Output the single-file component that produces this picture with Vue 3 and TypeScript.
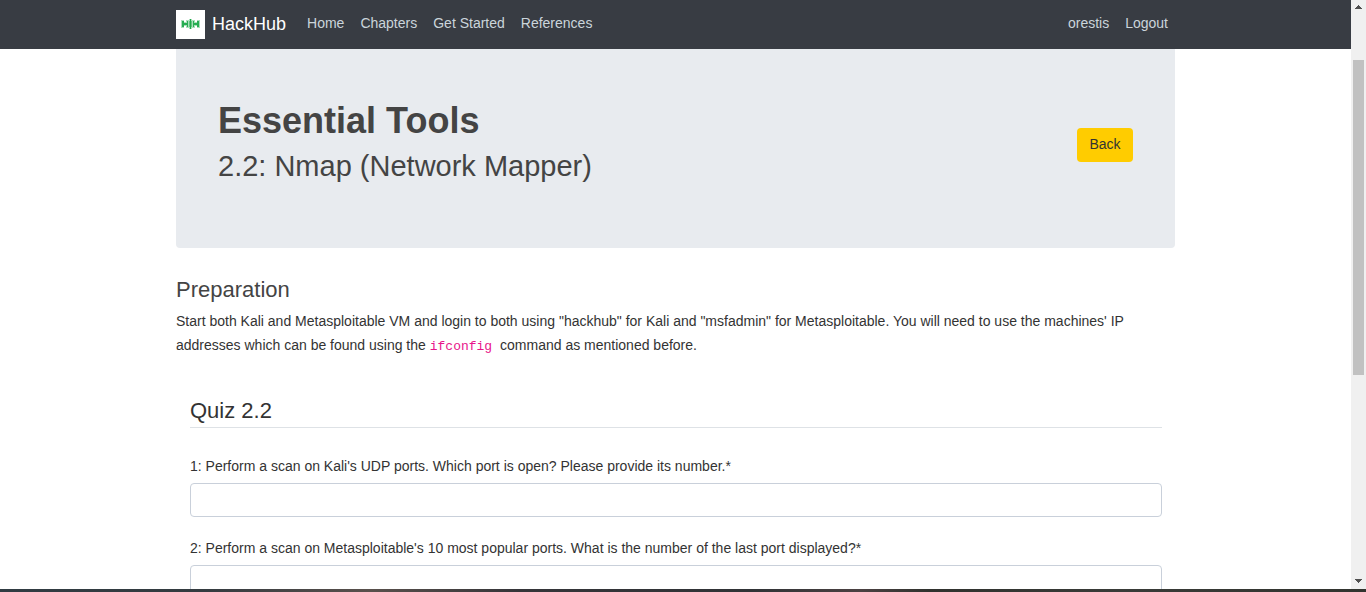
<script setup lang="ts">
import { ref } from 'vue'

interface NavItem {
  label: string
  href: string
}

interface Question {
  id: number
  text: string
}

const mainLinks: NavItem[] = [
  { label: 'Home', href: '#home' },
  { label: 'Chapters', href: '#chapters' },
  { label: 'Get Started', href: '#get-started' },
  { label: 'References', href: '#references' },
]

const userLinks: NavItem[] = [
  { label: 'orestis', href: '#profile' },
  { label: 'Logout', href: '#logout' },
]

const questions: Question[] = [
  { id: 1, text: "Perform a scan on Kali's UDP ports. Which port is open? Please provide its number." },
  { id: 2, text: "Perform a scan on Metasploitable's 10 most popular ports. What is the number of the last port displayed?" },
]

const answers = ref<string[]>(questions.map(() => ''))
</script>

<template>
  <div class="screen">
    <div class="window">
      <div class="page">
        <header class="navbar">
          <nav class="container nav-row">
            <a class="brand" href="#home">
              <svg class="logo" viewBox="0 0 29 29" aria-hidden="true">
                <rect width="29" height="29" fill="#fff" />
                <path d="M5 10h3v8H5zM10 10h3v8h-3zM16 10h3v8h-3zM21 10h3v8h-3zM8 12h2v4H8zM19 12h2v4h-2zM13 9h3v10h-3z" fill="#a9dfba" />
                <path d="M6 11h2v6H6zM11 11h1v6h-1zM17 11h1v6h-1zM21 11h2v6h-2zM8 13h3v2H8zM18 13h3v2h-3z" fill="#27ad52" />
                <path d="M14 9h1v10h-1z" fill="#1fa94b" />
                <path d="M13 11h1v6h-1zM15 11h1v6h-1z" fill="#62c580" />
              </svg>
              <span>HackHub</span>
            </a>
            <ul class="links">
              <li v-for="item in mainLinks" :key="item.label">
                <a :href="item.href">{{ item.label }}</a>
              </li>
            </ul>
            <ul class="links user">
              <li v-for="item in userLinks" :key="item.label">
                <a :href="item.href">{{ item.label }}</a>
              </li>
            </ul>
          </nav>
        </header>

        <main class="container content">
          <section class="hero">
            <div>
              <h1>Essential Tools</h1>
              <h2>2.2: Nmap (Network Mapper)</h2>
            </div>
            <button class="back" type="button">Back</button>
          </section>

          <section class="preparation">
            <h3>Preparation</h3>
            <p>
              Start both Kali and Metasploitable VM and login to both using "hackhub" for Kali and
              "msfadmin" for Metasploitable. You will need to use the machines' IP addresses which
              can be found using the <code>ifconfig</code> command as mentioned before.
            </p>
          </section>

          <form class="quiz" @submit.prevent>
            <h3>Quiz 2.2</h3>
            <div v-for="(q, i) in questions" :key="q.id" class="field">
              <label :for="`answer-${q.id}`">{{ q.id }}: {{ q.text }}*</label>
              <input :id="`answer-${q.id}`" v-model="answers[i]" type="text" required />
            </div>
          </form>
        </main>
      </div>

      <div class="scrollbar" aria-hidden="true">
        <svg class="arrow" viewBox="0 0 7 4" shape-rendering="crispEdges">
          <path d="M3 0h1v1h1v1h1v1h1v1H0V3h1V2h1V1h1z" fill="#505050" />
        </svg>
        <div class="track"><div class="thumb"></div></div>
        <svg class="arrow" viewBox="0 0 7 4" shape-rendering="crispEdges">
          <path d="M0 0h7v1H6v1H5v1H4v1H3V3H2V2H1V1H0z" fill="#505050" />
        </svg>
      </div>
    </div>
    <div class="desktop-edge"></div>
  </div>
</template>

<style>
body {
  margin: 0;
  overflow: hidden;
}
</style>

<style scoped>
.screen,
.screen * {
  box-sizing: border-box;
}

.screen {
  display: flex;
  flex-direction: column;
  height: 100vh;
  font-family: "Liberation Sans", Arial, sans-serif;
  font-size: 14px;
  line-height: 24px;
  color: #333;
  background: #fff;
}

.window {
  display: flex;
  flex: 1;
  min-height: 0;
}

.page {
  flex: 1;
  min-width: 0;
  overflow: hidden;
}

.container {
  width: 100%;
  max-width: 999px;
  margin: 0 auto;
}

.navbar {
  background: #383c43;
}

.nav-row {
  display: flex;
  align-items: center;
  padding: 10px 7px 10px 0;
  line-height: 23px;
}

.brand {
  display: flex;
  align-items: center;
  gap: 7px;
  margin-right: 21px;
  font-size: 18px;
  color: #fff;
  text-decoration: none;
}

.logo {
  width: 29px;
  height: 29px;
}

.links {
  display: flex;
  gap: 16px;
  margin: 0;
  padding: 0 0 2px;
  list-style: none;
}

.links a {
  color: #cbd5db;
  text-decoration: none;
}

.user {
  margin-left: auto;
}

.hero {
  display: flex;
  align-items: center;
  justify-content: space-between;
  padding: 50px 42px 57px 42px;
  border-radius: 0 0 4px 4px;
  background: #e8ebef;
}

h1,
h2,
h3 {
  margin: 0;
  font-weight: 400;
  color: #444;
}

h1 {
  margin-bottom: 7px;
  font-size: 36px;
  font-weight: 700;
  line-height: 43px;
}

h2 {
  margin-bottom: 7px;
  font-size: 29px;
  line-height: 35px;
}

h3 {
  font-size: 22px;
  line-height: 26px;
}

.back {
  min-width: 56px;
  height: 34px;
  padding: 0 12px 2px;
  border: 0;
  border-radius: 4px;
  font: inherit;
  color: #333;
  background: #ffcc00;
}

.preparation {
  padding-top: 29px;
}

.preparation p {
  margin: 6px 0 0;
}

code {
  margin-right: 4px;
  font-family: "Liberation Mono", "Courier New", monospace;
  font-size: 13px;
  line-height: 16px;
  color: #e8138a;
}

.quiz {
  padding: 41px 13px 0 14px;
}

.quiz h3 {
  margin-bottom: 26px;
  padding-bottom: 3px;
  border-bottom: 1px solid #dee2e6;
  color: #333;
}

.field {
  margin-bottom: 19px;
}

.field label {
  display: block;
  margin-bottom: 5px;
}

.field input {
  display: block;
  width: 100%;
  height: 34px;
  padding: 0 11px;
  border: 1px solid #c9d0da;
  border-radius: 4px;
  font: inherit;
  color: #333;
  background: #fff;
}

.scrollbar {
  display: flex;
  flex-direction: column;
  align-items: center;
  width: 15px;
  padding: 5px 0 6px;
  background: #f0f0f0;
}

.arrow {
  width: 7px;
  height: 4px;
}

.track {
  display: flex;
  flex: 1;
  flex-direction: column;
  width: 11px;
  padding-top: 51px;
}

.thumb {
  flex: 315;
  background: #c1c1c1;
}

.track::after {
  flex: 204;
  content: "";
}

.desktop-edge {
  height: 3px;
  background: linear-gradient(90deg, #303b42 0%, #343b40 15%, #59504c 27%, #353539 38%, #303336 55%, #4b4142 63%, #30322e 68%, #393b38 82%, #32342f 100%);
}
</style>
